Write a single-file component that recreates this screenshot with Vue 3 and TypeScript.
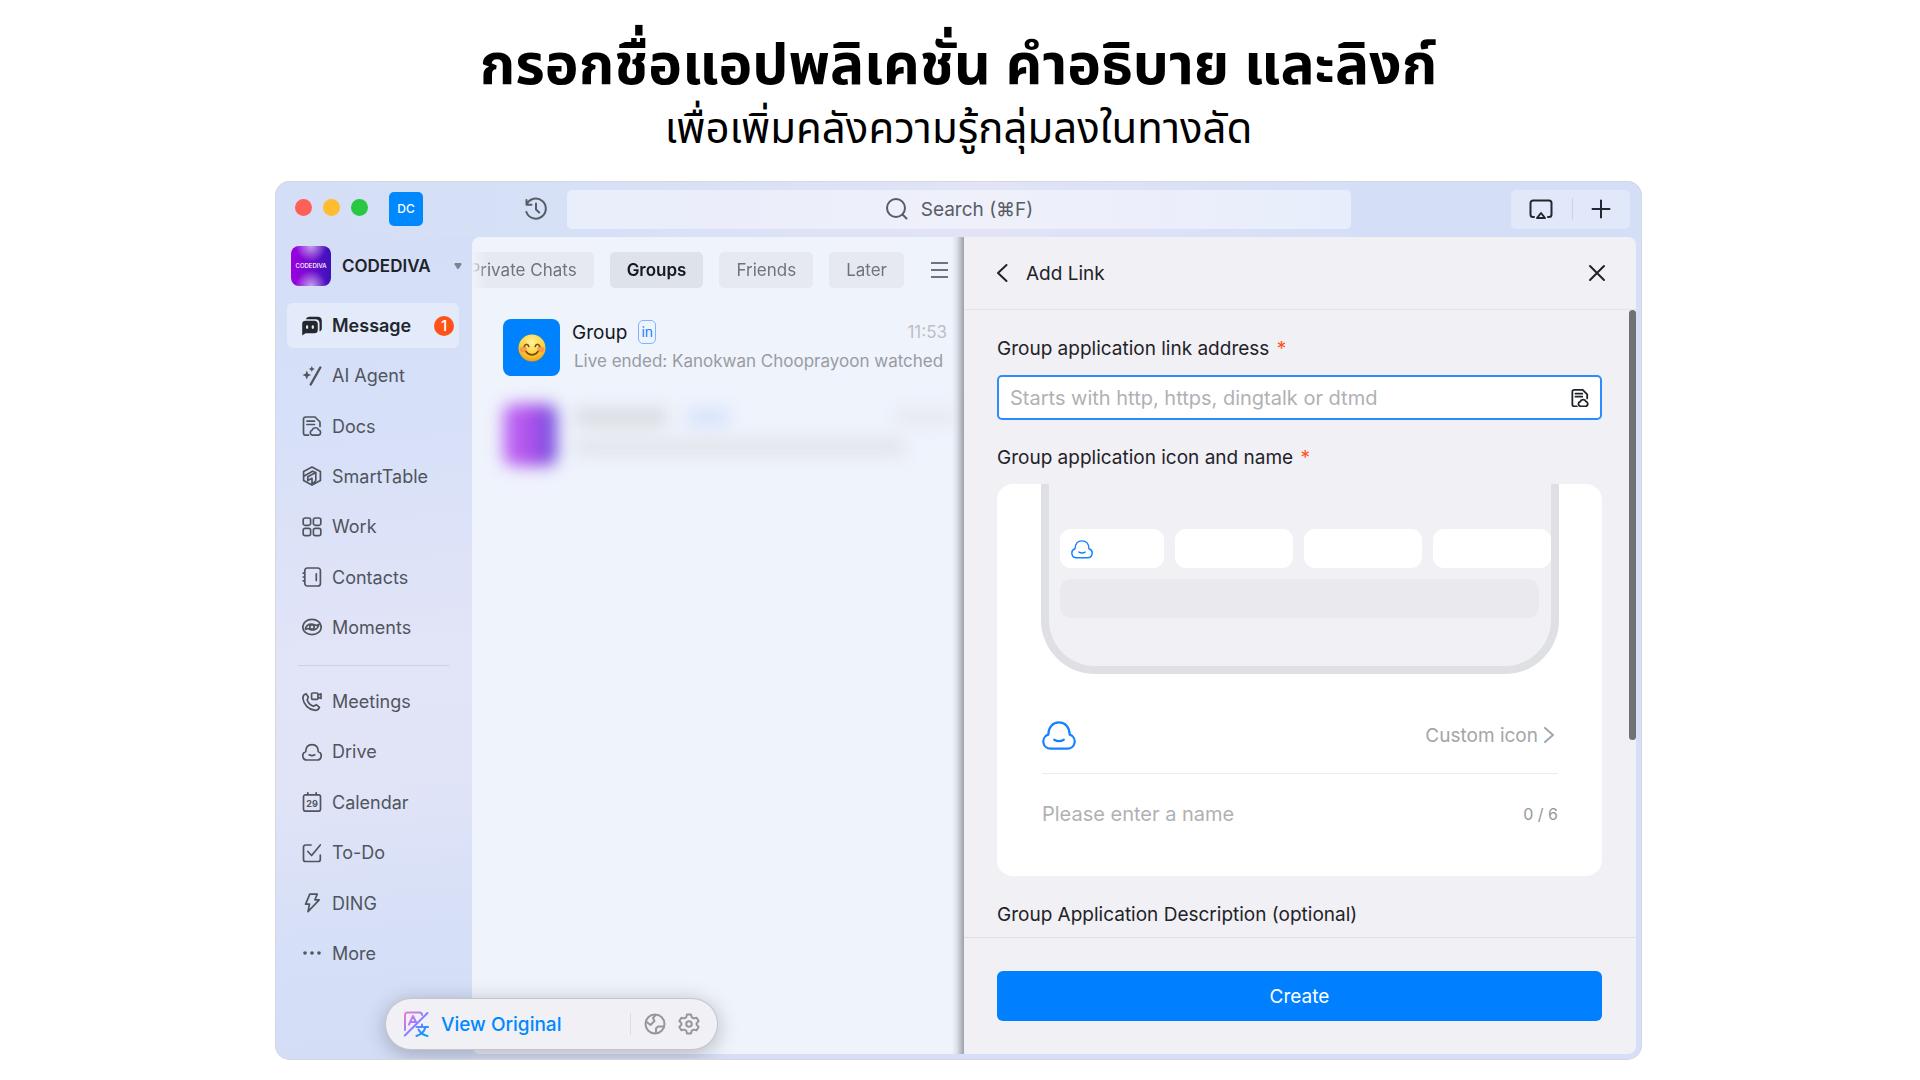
<script setup lang="ts">
import { ref } from 'vue'

interface NavItem {
  label: string
  icon: string
  active?: boolean
  badge?: number
}

const mainNav: NavItem[] = [
  { label: 'Message', icon: 'message', active: true, badge: 1 },
  { label: 'AI Agent', icon: 'agent' },
  { label: 'Docs', icon: 'docs' },
  { label: 'SmartTable', icon: 'table' },
  { label: 'Work', icon: 'work' },
  { label: 'Contacts', icon: 'contacts' },
  { label: 'Moments', icon: 'moments' },
]

const toolNav: NavItem[] = [
  { label: 'Meetings', icon: 'meetings' },
  { label: 'Drive', icon: 'drive' },
  { label: 'Calendar', icon: 'calendar' },
  { label: 'To-Do', icon: 'todo' },
  { label: 'DING', icon: 'ding' },
  { label: 'More', icon: 'more' },
]

const strokes: Record<string, string> = {
  agent: 'M8.700 18.500 18.300 1.500',
  docs: 'M6.500 19.200H3.500a2 2 0 0 1-2-2V3a2 2 0 0 1 2-2h9.500l5 5v4.500M5 5.200h7.500M5 8.500h7.500M10.800 19.200a2.600 2.600 0 0 1-.6-5.100 3.400 3.400 0 0 1 6.300-.4 2.900 2.900 0 0 1 .2 5.500Z',
  table: 'M10 .9 18.400 5.500v9L10 19.100 1.600 14.500v-9ZM1.800 10.200 10.500 5.200l3.200 1.300M5.800 14.500v-3.700l8-4.300v8l-3.900 4.300M5.800 14.500l4.200-2.200v6',
  work: 'M3 1h3.800a1.800 1.800 0 0 1 1.800 1.800v3.700a1.800 1.800 0 0 1-1.800 1.800H3A1.800 1.800 0 0 1 1.200 6.500V2.800A1.800 1.800 0 0 1 3 1ZM13.200 1H17a1.800 1.800 0 0 1 1.800 1.800v3.700A1.800 1.800 0 0 1 17 8.300h-3.800a1.800 1.800 0 0 1-1.800-1.800V2.800A1.800 1.800 0 0 1 13.200 1ZM3 11.300h3.800a1.800 1.800 0 0 1 1.800 1.800v3.800a1.800 1.800 0 0 1-1.800 1.800H3a1.800 1.800 0 0 1-1.800-1.800v-3.800A1.800 1.800 0 0 1 3 11.300ZM13.200 11.300H17a1.800 1.800 0 0 1 1.800 1.800v3.800a1.800 1.800 0 0 1-1.800 1.800h-3.800a1.800 1.800 0 0 1-1.800-1.800v-3.800a1.800 1.800 0 0 1 1.800-1.800Z',
  contacts: 'M5.300 1h10.600a2.500 2.500 0 0 1 2.500 2.500v13a2.500 2.500 0 0 1-2.500 2.500H5.300a2.500 2.500 0 0 1-2.500-2.500v-13A2.500 2.500 0 0 1 5.300 1ZM14.300 6.800v6.600M1.200 6.200h1.600M1.200 10h1.600M1.200 13.800h1.600',
  moments: 'M10 2.300c5.300 0 9.200 3.400 9.200 7.700s-3.900 7.700-9.200 7.700S.8 14.300.8 10 4.700 2.300 10 2.300ZM3.500 11C5 7.500 9 6 12.300 7.800c1.500.8 3 .8 4.500-.3M16.500 9C15 12.500 11 14 7.700 12.200c-1.500-.8-3-.8-4.200.1M10 7.800a2.200 2.200 0 1 1 0 4.400 2.200 2.200 0 0 1 0-4.400Z',
  meetings: 'M4 1.800 6.300 5 5.200 8c1 3 3.300 5.200 6.300 6.300l2.800-1.600 3.200 2.600c-.8 2.300-2.700 3.300-5 2.900C6.500 17.500 1.700 12.500.9 6.500.8 4.300 2 2.300 4 1.800ZM10.600 1h4.300a1 1 0 0 1 1 1v4.300a1 1 0 0 1-1 1h-4.300a1 1 0 0 1-1-1V2a1 1 0 0 1 1-1ZM15.900 3.200l3.100-1.400v4.700l-3.100-1.400',
  drive: 'M5 18a4.200 4.200 0 0 1-1.300-8.200C3.800 5.300 6.300 2.600 10 2.600s6.200 2.700 6.300 7.200A4.200 4.200 0 0 1 15 18ZM7.200 12.800c1.700 1 3.900 1 5.600 0',
  calendar: 'M3.500 2.800h13a2 2 0 0 1 2 2v12.400a2 2 0 0 1-2 2h-13a2 2 0 0 1-2-2V4.800a2 2 0 0 1 2-2ZM5.800.8v2M14.200.8v2',
  todo: 'M9 2H3.500a2 2 0 0 0-2 2v12.500a2 2 0 0 0 2 2h12.800a2 2 0 0 0 2-2V12M5.800 8.500l3.800 4L18.300 2',
  ding: 'M7.800 1.200h7.400l-2.300 5.600h4.300L6 18.600l1.500-7.400H3.600Z',
}

const tabs = ['Private Chats', 'Groups', 'Friends', 'Later']
const activeTab = ref('Groups')
const link = ref('')
const appName = ref('')
</script>

<template>
  <div class="page">
    <header class="heading">
      <h1>กรอกชื่อแอปพลิเคชั่น คำอธิบาย และลิงก์</h1>
      <p>เพื่อเพิ่มคลังความรู้กลุ่มลงในทางลัด</p>
    </header>

    <main class="window">
      <div class="titlebar">
        <div class="lights"><i class="red"></i><i class="yellow"></i><i class="green"></i></div>
        <span class="dc">DC</span>
        <button class="history" aria-label="History">
          <svg width="24" height="24" viewBox="0 0 24 24" fill="none" stroke="currentColor" stroke-width="2" stroke-linecap="round" stroke-linejoin="round">
            <path d="M2.500 3v4.800h5M2.800 7.300A10 10 0 1 1 2.400 15M12 6.500v6l3.200 3" />
          </svg>
        </button>
        <button class="search">
          <svg width="24" height="24" viewBox="0 0 24 24" fill="none" stroke="currentColor" stroke-width="2" stroke-linecap="round">
            <circle cx="11" cy="11" r="9" /><path d="m17.500 17.500 4 4" />
          </svg>
          Search (⌘F)
        </button>
        <div class="actions">
          <button aria-label="Cast">
            <svg width="24" height="24" viewBox="0 0 24 24" fill="none" stroke="currentColor" stroke-width="2" stroke-linecap="round" stroke-linejoin="round">
              <path d="M5 20H4a2.500 2.500 0 0 1-2.500-2.500V6A2.500 2.500 0 0 1 4 3.500h16A2.500 2.500 0 0 1 22.500 6v11.500A2.500 2.500 0 0 1 20 20h-1M12 16l4 5H8Z" />
            </svg>
          </button>
          <span class="bar"></span>
          <button aria-label="Add">
            <svg width="20" height="20" viewBox="0 0 20 20" fill="none" stroke="currentColor" stroke-width="2" stroke-linecap="round"><path d="M10 1.500v17M1.500 10h17" /></svg>
          </button>
        </div>
      </div>

      <div class="body">
        <aside class="sidebar">
          <div class="org">
            <span class="logo">CODEDIVA</span>
            <strong>CODEDIVA</strong>
            <svg width="8" height="8" viewBox="0 0 8 8" fill="#7d838f"><path d="M1 1h6l.7 1.200L4.500 7h-1L.3 2.200Z" /></svg>
          </div>
          <template v-for="(group, g) in [mainNav, toolNav]" :key="g">
            <nav :class="['nav', g === 0 ? 'nav-main' : 'nav-tools']">
              <a v-for="item in group" :key="item.label" href="#" :class="{ active: item.active }">
                <svg v-if="item.icon === 'message'" width="20" height="20" viewBox="0 0 20 20">
                  <path d="M3.800 3.200A3.800 3.800 0 0 1 7.200.8h8.300A4.300 4.300 0 0 1 19.800 5v7.500a3 3 0 0 1-2.300 3V7a4 4 0 0 0-4-3.800Z" fill="currentColor" />
                  <path d="M3.500 4.700h8.800A3.500 3.500 0 0 1 15.800 8.200v5.600a3.500 3.500 0 0 1-3.500 3.500H3.500L.2 19.500V8a3.300 3.300 0 0 1 3.300-3.300Z" fill="currentColor" />
                  <rect x="4" y="9.300" width="2.200" height="3.600" rx="1.100" fill="#e2e9f9" /><rect x="9.700" y="9.300" width="2.200" height="3.600" rx="1.100" fill="#e2e9f9" />
                </svg>
                <svg v-else-if="item.icon === 'more'" width="20" height="20" viewBox="0 0 20 20" fill="currentColor">
                  <circle cx="3" cy="10" r="1.800" /><circle cx="10" cy="10" r="1.800" /><circle cx="17" cy="10" r="1.800" />
                </svg>
                <svg v-else width="20" height="20" viewBox="0 0 20 20" fill="none" stroke="currentColor" :stroke-width="item.icon === 'agent' ? 2.4 : 1.7" stroke-linecap="round" stroke-linejoin="round">
                  <path :d="strokes[item.icon]" />
                  <path v-if="item.icon === 'agent'" stroke="none" fill="currentColor" d="M4.800 4.600 6.100 7.700 9.200 9 6.100 10.300 4.800 13.400 3.500 10.300.4 9l3.100-1.300ZM9.800 0l.9 2.100 2.100.9-2.100.9-.9 2.100L8.900 3.900 6.800 3l2.100-.9Z" />
                  <text v-if="item.icon === 'calendar'" x="10" y="14.500" text-anchor="middle" class="day">29</text>
                </svg>
                {{ item.label }}
                <span v-if="item.badge" class="badge">{{ item.badge }}</span>
              </a>
            </nav>
            <hr v-if="g === 0" />
          </template>
        </aside>

        <section class="chats">
          <div class="filter">
            <div class="tabs">
              <button v-for="tab in tabs" :key="tab" :class="{ on: tab === activeTab }" @click="activeTab = tab">{{ tab }}</button>
            </div>
            <button class="menu" aria-label="Filter menu">
              <svg width="17" height="16" viewBox="0 0 17 16" stroke="currentColor" stroke-width="2"><path d="M0 1h17M0 8h17M0 15h17" /></svg>
            </button>
          </div>
          <article class="chat">
            <span class="face">
              <svg width="28" height="28" viewBox="0 0 28 28" fill="none">
                <defs>
                  <radialGradient id="skin" cx=".5" cy=".3" r=".7"><stop offset="0" stop-color="#fff3a0" /><stop offset=".6" stop-color="#ffd43b" /><stop offset="1" stop-color="#f39a12" /></radialGradient>
                </defs>
                <circle cx="14" cy="14" r="13.500" fill="url(#skin)" />
                <ellipse cx="5.500" cy="15.500" rx="3.500" ry="3" fill="#fb6b4b" opacity=".55" />
                <ellipse cx="22.500" cy="15.500" rx="3.500" ry="3" fill="#fb6b4b" opacity=".55" />
                <path d="M6.300 12.500c.8-3 3.700-3 4.500 0M17.200 12.500c.8-3 3.700-3 4.500 0M8 17.500c3 4.500 9 4.500 12 0" stroke="#7a4a10" stroke-width="1.600" stroke-linecap="round" />
              </svg>
            </span>
            <div class="info">
              <div class="line"><h2>Group</h2><span class="tag">in</span><time>11:53</time></div>
              <p>Live ended: Kanokwan Chooprayoon watched</p>
            </div>
          </article>
          <div class="hidden-chat" aria-hidden="true">
            <i class="h-face"></i>
            <div class="h-info">
              <div class="h-line"><i class="h-name"></i><i class="h-tag"></i><i class="h-time"></i></div>
              <i class="h-text"></i>
            </div>
          </div>
        </section>

        <form class="drawer" @submit.prevent>
          <header class="d-head">
            <button type="button" aria-label="Back">
              <svg width="12" height="20" viewBox="0 0 12 20" fill="none" stroke="currentColor" stroke-width="2" stroke-linecap="round" stroke-linejoin="round"><path d="M10.500 2 2 10l8.500 8" /></svg>
            </button>
            <h2>Add Link</h2>
            <button type="button" class="close" aria-label="Close">
              <svg width="18" height="18" viewBox="0 0 18 18" fill="none" stroke="currentColor" stroke-width="2" stroke-linecap="round"><path d="m2 2 14 14M16 2 2 16" /></svg>
            </button>
          </header>
          <div class="d-body">
            <label for="link">Group application link address <em>*</em></label>
            <div class="field">
              <input id="link" v-model="link" type="text" placeholder="Starts with http, https, dingtalk or dtmd" />
              <svg width="18" height="18" viewBox="0 0 20 20" fill="none" stroke="#1f2329" stroke-width="2" stroke-linecap="round" stroke-linejoin="round"><path :d="strokes.docs" /></svg>
            </div>
            <label for="name">Group application icon and name <em>*</em></label>
            <div class="card">
              <div class="phone">
                <div class="chips">
                  <span class="first"><svg width="22" height="22" viewBox="0 0 20 20" fill="none" stroke="#1482ff" stroke-width="1.300" stroke-linecap="round" stroke-linejoin="round"><path :d="strokes.drive" /></svg></span>
                  <span></span><span></span><span></span>
                </div>
                <div class="inputbar"></div>
              </div>
              <div class="row icon-row">
                <svg width="34" height="34" viewBox="0 0 20 20" fill="none" stroke="#1482ff" stroke-width="1.300" stroke-linecap="round" stroke-linejoin="round"><path :d="strokes.drive" /></svg>
                <button type="button">
                  Custom icon
                  <svg width="10" height="16" viewBox="0 0 10 16" fill="none" stroke="currentColor" stroke-width="2" stroke-linecap="round" stroke-linejoin="round"><path d="m1 1 8 7-8 7" /></svg>
                </button>
              </div>
              <div class="row name-row">
                <input id="name" v-model="appName" type="text" maxlength="6" placeholder="Please enter a name" />
                <span>{{ appName.length }} / 6</span>
              </div>
            </div>
            <div class="desc">Group Application Description (optional)</div>
            <i class="thumb"></i>
          </div>
          <footer><button type="submit">Create</button></footer>
        </form>
      </div>

      <div class="pill">
        <svg width="26" height="26" viewBox="0 0 26 26" fill="none" stroke-width="2" stroke-linecap="round" stroke-linejoin="round">
          <defs>
            <linearGradient id="tr" x1="0" y1="0" x2="26" y2="26" gradientUnits="userSpaceOnUse"><stop offset="0" stop-color="#ff7ac0" /><stop offset=".45" stop-color="#a07cff" /><stop offset=".8" stop-color="#1e90ff" /><stop offset="1" stop-color="#00b4ff" /></linearGradient>
          </defs>
          <path stroke="url(#tr)" d="M2 19V4a2.500 2.500 0 0 1 2.500-2.500H17A2.500 2.500 0 0 1 19 4M1.800 24.500 24.500 2M6 13.500l4-8.500 3 6M7.500 11h4.500M19 13.500V16M13.500 16H25M22.500 16c-1 4-4.500 7.500-9 9M15.500 18.500c1.500 3 5 5.500 9 6.500" />
        </svg>
        <button class="view">View Original</button>
        <span class="bar"></span>
        <button aria-label="Language">
          <svg width="22" height="22" viewBox="0 0 22 22" fill="none" stroke="currentColor" stroke-width="2" stroke-linecap="round" stroke-linejoin="round">
            <circle cx="11" cy="11" r="9.500" /><path d="M2 8.500 6.500 12 10.500 8 9 5l2.500-3M12 20v-4.500l2-2h6" />
          </svg>
        </button>
        <button aria-label="Settings">
          <svg width="22" height="22" viewBox="0 0 22 22" fill="none" stroke="currentColor" stroke-width="2" stroke-linejoin="round">
            <path d="M9 1.500h4l.8 2.800 2 1.100 2.800-.7 2 3.400-2 2.100v1.600l2 2.100-2 3.400-2.800-.7-2 1.100-.8 2.800H9l-.8-2.800-2-1.100-2.800.7-2-3.400 2-2.100v-1.600l-2-2.100 2-3.400 2.800.7 2-1.100Z" /><circle cx="11" cy="11" r="2.800" />
          </svg>
        </button>
      </div>
    </main>
  </div>
</template>

<style>
body {
  margin: 0;
  background: #fff;
}
</style>

<style scoped>
* {
  box-sizing: border-box;
}
.page {
  padding: 0 278px 20px 275px;
  font-family: Inter, "Noto Sans", sans-serif;
  color: #1f2329;
}
h1,
h2,
p {
  margin: 0;
}
svg {
  display: block;
  flex: none;
}
button {
  padding: 0;
  border: 0;
  background: none;
  color: inherit;
  font: inherit;
}
.heading {
  height: 181px;
  padding-top: 30px;
  color: #000;
  text-align: center;
  font-family: "Noto Sans Thai", "Noto Sans", sans-serif;
  white-space: nowrap;
}
.heading h1 {
  font-size: 57px;
  line-height: 74px;
  font-weight: 700;
}
.heading p {
  font-size: 42px;
  line-height: 52px;
}
.window {
  position: relative;
  padding-bottom: 6px;
  border-radius: 15px;
  background: #d6dff7;
  overflow: hidden;
}
.window::after {
  content: "";
  position: absolute;
  inset: 0;
  border-radius: inherit;
  box-shadow: inset 0 0 0 1px #d4d7de;
  pointer-events: none;
}
.titlebar {
  display: flex;
  align-items: center;
  height: 56px;
  padding: 0 12px 0 20px;
  background: linear-gradient(90deg, #d4dff7 0%, #d6e0f6 22%, #e2e3f6 52%, #d4dff7 80%, #d4dff7 100%);
  color: #575c66;
}
.lights {
  display: flex;
  gap: 11px;
  margin-bottom: 3px;
}
.lights i {
  width: 17px;
  height: 17px;
  border-radius: 50%;
}
.red { background: #ff5f57; }
.yellow { background: #febc2e; }
.green { background: #28c840; }
.dc {
  width: 34px;
  margin-left: 21px;
  border-radius: 5px;
  background: #0088ff;
  color: #fff;
  font-size: 12px;
  font-weight: 500;
  line-height: 34px;
  text-align: center;
}
.history {
  margin: 0 19px 0 101px;
}
.search {
  display: flex;
  flex: 1;
  align-items: center;
  justify-content: center;
  gap: 12px;
  height: 39px;
  margin-right: 160px;
  border-radius: 5px;
  background: rgba(255, 255, 255, 0.45);
  font-size: 19px;
}
.actions {
  display: flex;
  align-items: center;
  justify-content: space-between;
  width: 119px;
  height: 39px;
  padding: 0 19px 0 18px;
  border-radius: 5px;
  background: rgba(255, 255, 255, 0.3);
  color: #23272e;
}
.bar {
  width: 1px;
  height: 22px;
  background: #ccd3e4;
}
.body {
  display: flex;
  padding-right: 6px;
}
.sidebar {
  width: 197px;
  margin-bottom: -6px;
  padding: 9px 13px 0 12px;
  background: linear-gradient(175deg, #d4dff7 0%, #d6e0f8 22%, #e2e4f7 50%, #e1e4f7 65%, #d5dff7 85%, #d3ddf5 100%);
}
.org {
  display: flex;
  align-items: center;
  height: 40px;
  margin: 0 -3px 0 4px;
  font-size: 17px;
}
.org strong {
  flex: 1;
  margin-left: 11px;
  font-weight: 600;
}
.logo {
  width: 40px;
  border-radius: 8px;
  background:
    radial-gradient(circle at 50% 0, rgba(255, 255, 255, 0.6), transparent 35%),
    radial-gradient(circle at 50% 100%, rgba(255, 255, 255, 0.6), transparent 35%),
    linear-gradient(90deg, #9c00e0, #6d0ccc 55%, #3b12b8);
  color: #fff;
  font-size: 6px;
  font-weight: 500;
  line-height: 40px;
  text-align: center;
}
.nav {
  display: flex;
  flex-direction: column;
  justify-content: space-between;
}
.nav-main {
  height: 347px;
  margin-top: 17px;
}
.nav-tools {
  height: 297px;
}
.nav a {
  display: flex;
  align-items: center;
  gap: 10px;
  height: 45px;
  padding: 0 5px 0 15px;
  border-radius: 6px;
  color: #50555d;
  font-size: 18px;
  text-decoration: none;
}
.nav a.active {
  background: rgba(255, 255, 255, 0.35);
  color: #23272e;
  font-weight: 600;
}
.badge {
  width: 20px;
  margin-left: auto;
  border-radius: 50%;
  background: #ff5219;
  color: #fff;
  font-size: 15px;
  font-weight: 500;
  line-height: 20px;
  text-align: center;
}
.day {
  fill: currentColor;
  stroke: none;
  font-size: 9px;
  font-weight: 700;
}
.sidebar hr {
  height: 1px;
  margin: 15px 10px 13px 11px;
  border: 0;
  background: #cdd1e6;
}
.chats {
  flex: 492 1 0;
  min-width: 0;
  padding-top: 15px;
  border-radius: 8px 0 0 8px;
  background: #eff3fc;
  overflow: hidden;
}
.filter {
  display: flex;
  align-items: center;
  gap: 27px;
  padding-right: 16px;
  color: #6f747c;
}
.tabs {
  display: flex;
  flex: 1;
  justify-content: flex-end;
  gap: 16px;
  min-width: 0;
  overflow: hidden;
  mask-image: linear-gradient(90deg, transparent, #000 14px);
}
.tabs button {
  flex: none;
  height: 36px;
  padding: 0 17px;
  border-radius: 5px;
  background: #e6e9f1;
  font-size: 17px;
}
.tabs button.on {
  background: #dee2ea;
  color: #15181d;
  font-weight: 600;
}
.chat {
  display: flex;
  gap: 12px;
  margin-top: 31px;
  padding: 0 17px 0 31px;
}
.face {
  display: grid;
  place-items: center;
  width: 57px;
  height: 57px;
  border-radius: 8px;
  background: #0082ff;
}
.info {
  flex: 1;
  min-width: 0;
}
.line {
  display: flex;
  align-items: center;
  height: 26px;
}
.line h2 {
  font-size: 19px;
  font-weight: 400;
  color: #15181d;
}
.tag {
  width: 18px;
  margin-left: 11px;
  border: 1px solid #7db5ff;
  border-radius: 5px;
  color: #1482ff;
  font-size: 14px;
  line-height: 22px;
  text-align: center;
}
.line time {
  margin-left: auto;
  color: #bcbfc5;
  font-size: 17px;
}
.info p {
  padding: 4px 0 0 2px;
  color: #989ba1;
  font-size: 17px;
  line-height: 24px;
  white-space: nowrap;
}
.hidden-chat {
  display: flex;
  gap: 18px;
  margin-top: 28px;
  padding: 0 10px 0 31px;
  filter: blur(8px);
}
.h-face {
  width: 54px;
  height: 62px;
  border-radius: 10px;
  background: linear-gradient(90deg, #c070f4, #b050ec 50%, #6a50dc);
}
.h-info {
  flex: 1;
  padding-top: 4px;
}
.h-line {
  display: flex;
  gap: 20px;
}
.h-line i,
.h-text {
  display: block;
  height: 18px;
  background: #dadce1;
}
.h-name { width: 92px; }
.h-line .h-tag { width: 42px; background: #d7e3fb; }
.h-line .h-time { width: 58px; margin-left: auto; background: #e6e9f0; }
.h-text {
  width: 330px;
  margin-top: 12px;
  background: #e2e5ea;
}
.drawer {
  position: relative;
  flex: 672 1 0;
  min-width: 0;
  border-radius: 0 8px 8px 0;
  background: #f1f0f5;
  font-size: 19px;
}
.drawer::before {
  content: "";
  position: absolute;
  inset: 0 100% 0 auto;
  width: 12px;
  background: linear-gradient(90deg, transparent, rgba(90, 92, 98, 0.12) 40%, rgba(90, 92, 98, 0.55));
}
.d-head {
  display: flex;
  align-items: center;
  height: 73px;
  padding: 0 30px 0 32px;
  border-bottom: 1px solid #e3e3e8;
}
.d-head h2 {
  flex: 1;
  margin-left: 18px;
  font-size: 19px;
  font-weight: 400;
}
.d-body {
  position: relative;
  padding: 23px 34px 6px 33px;
}
.d-body label,
.desc {
  display: block;
  line-height: 32px;
}
.d-body em {
  margin-left: 2px;
  color: #ff5219;
  font-style: normal;
}
.field {
  display: flex;
  align-items: center;
  height: 45px;
  margin: 10px 0 22px;
  padding: 0 11px;
  border: 2px solid #2b8cff;
  border-radius: 5px;
  background: #fff;
}
input {
  flex: 1;
  min-width: 0;
  padding: 0;
  border: 0;
  outline: 0;
  background: none;
  color: #1f2329;
  font: 20px Inter, "Noto Sans", sans-serif;
}
input::placeholder {
  color: #b0b1b4;
  opacity: 1;
}
.card {
  margin: 10px 0 23px;
  padding: 0 43px 23px 44px;
  border-radius: 16px;
  background: #fff;
}
.phone {
  height: 190px;
  padding: 45px 0 0 11px;
  border: 8px solid #dee0e4;
  border-top: 0;
  border-radius: 0 0 54px 54px;
  background: #f1f0f5;
}
.chips {
  display: flex;
  gap: 11px;
}
.chips span {
  flex: 118 1 0;
  height: 39px;
  border-radius: 11px;
  background: #fff;
}
.chips .first {
  display: flex;
  flex: 93 1 0;
  align-items: center;
  padding-left: 11px;
}
.inputbar {
  height: 39px;
  margin: 11px 12px 0 0;
  border-radius: 11px;
  background: #e9e9ee;
}
.row {
  display: flex;
  align-items: center;
  justify-content: space-between;
  margin: 0 1px;
}
.icon-row {
  height: 77px;
  margin-top: 23px;
  border-bottom: 1px solid #ededf0;
}
.icon-row button {
  display: flex;
  align-items: center;
  gap: 6px;
  padding-right: 4px;
  color: #a4a5a8;
}
.name-row {
  height: 79px;
}
.name-row span {
  color: #97989b;
  font-size: 16px;
}
.thumb {
  position: absolute;
  top: 0;
  right: 0;
  width: 7px;
  height: 430px;
  border-radius: 4px;
  background: #707173;
}
.drawer footer {
  padding: 33px 34px 33px 33px;
  border-top: 1px solid #dfdfe4;
}
.drawer footer button {
  width: 100%;
  height: 50px;
  border-radius: 6px;
  background: #007fff;
  color: #fff;
  font-size: 19px;
}
.pill {
  position: absolute;
  left: 111px;
  bottom: 11px;
  display: flex;
  align-items: center;
  width: 331px;
  height: 50px;
  padding: 0 17px;
  border-radius: 26px;
  background: #f1f0f5;
  box-shadow: 0 0 0 1px #c4c6cc, 0 4px 22px rgba(0, 0, 0, 0.28);
  color: #96979c;
}
.pill .view {
  margin: 0 auto 0 12px;
  color: #0088ff;
  font-size: 19px;
  font-weight: 500;
}
.pill .bar {
  background: #dcdce1;
}
.pill .bar + button {
  margin: 0 12px 0 13px;
}
</style>
